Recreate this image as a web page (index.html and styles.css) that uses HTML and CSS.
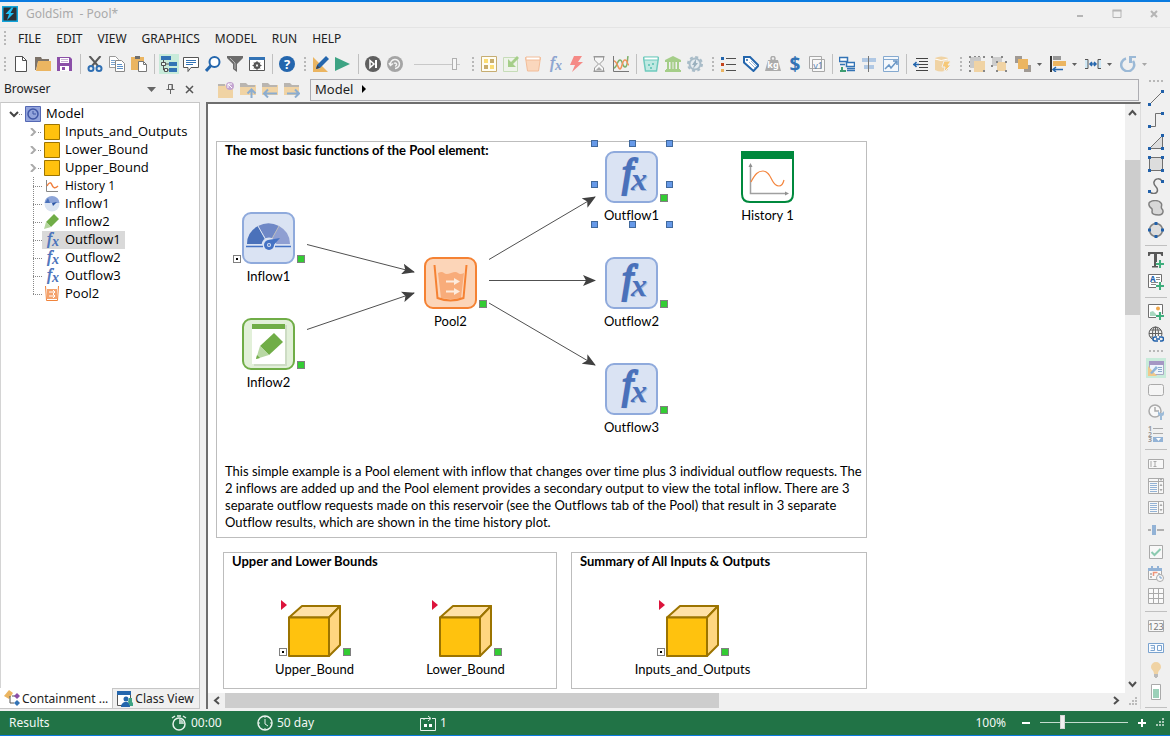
FILE: index.html
```html
<!DOCTYPE html>
<html lang="en">
<head>
    <meta charset="UTF-8">
    <meta name="viewport" content="width=device-width, initial-scale=1.0">
    <title>GoldSim - Pool*</title>
    <link rel="stylesheet" href="styles.css">
</head>
<body>

    <!-- Shared icons -->
    <svg class="defs" aria-hidden="true">
        <symbol id="i-fx" viewBox="0 0 16 16">
            <text x="3" y="12" class="fx-letter fx-f" font-size="17">f</text>
            <text x="8" y="14" class="fx-letter" font-size="14">x</text>
        </symbol>
        <symbol id="i-box" viewBox="0 0 16 16"><path d="M.5 .5h15v15H.5z" fill="#ffc20e" stroke="#9c7400"/></symbol>
        <symbol id="n-fx" viewBox="0 0 53 52">
            <rect x="1" y="1" width="51" height="50" rx="8" fill="#dae3f3" stroke="#8faadc" stroke-width="2"/>
            <g class="fx-shade">
                <text x="18" y="36" class="fx-letter fx-f" font-size="39">f</text>
                <text x="27" y="40" class="fx-letter" font-size="32">x</text>
            </g>
            <text x="17" y="35" class="fx-letter fx-f fx-heavy" font-size="39">f</text>
            <text x="26" y="39" class="fx-letter" font-size="32">x</text>
        </symbol>
        <symbol id="n-cube" viewBox="0 0 53 52">
            <g stroke="#9c7400" stroke-width="2" stroke-linejoin="round">
                <path d="M1 12.500L14 1h38L41 12.500z" fill="#ffe1a6"/>
                <path d="M41 12.500L52 1v39L41 51z" fill="#ffd680"/>
                <path d="M1 12.500h40V51H1z" fill="#ffc20e"/>
            </g>
        </symbol>
        <symbol id="i-arrow" viewBox="0 0 5 3"><path d="M0 0h5L2.500 3z" fill="#606060"/></symbol>
    </svg>

    <div class="app">
        <header class="titlebar">
            <svg class="icon" viewBox="0 0 16 16"><path d="M0 0h16v16H0z" fill="#12a5dc"/><path d="M1.500 1.500h13v13h-13z" fill="#2b3035"/><path d="M9.500 1.500L3.500 8h3.500L5 14l7-7H8.500L11.500 1.500z" fill="#1fc0f5"/></svg>
            <span class="title">GoldSim  - Pool*</span>
            <div class="window-buttons">
                <button aria-label="Minimize"><svg class="icon" viewBox="0 0 16 16"><path d="M5 10h6" stroke="#b5b5b5" stroke-width="2"/></svg></button>
                <button aria-label="Maximize"><svg class="icon" viewBox="0 0 16 16"><path d="M4 4.500h8v7H4z" fill="none" stroke="#b5b5b5"/><path d="M3.500 4.500h9" stroke="#b5b5b5" stroke-width="2"/></svg></button>
                <button aria-label="Close"><svg class="icon" viewBox="0 0 16 16"><path d="M5 5l6 6M11 5l-6 6" stroke="#b5b5b5" stroke-width="2"/></svg></button>
            </div>
        </header>

        <nav class="menubar">
            <span class="grip"></span>
            <button>FILE</button>
            <button>EDIT</button>
            <button>VIEW</button>
            <button>GRAPHICS</button>
            <button>MODEL</button>
            <button>RUN</button>
            <button>HELP</button>
        </nav>

        <!-- Main toolbar -->
        <div class="toolbar">
            <span class="grip"></span>
            <button class="tool" aria-label="New"><svg class="icon" viewBox="0 0 16 16"><path d="M2.500 .5h7l4 4v11h-11z" fill="#fff" stroke="#505050"/><path d="M9.500 .5v4h4" fill="none" stroke="#505050"/></svg></button>
            <button class="tool" aria-label="Open"><svg class="icon" viewBox="0 0 16 16"><path d="M0 1h6l1 2h7v3H3L1 14H0z" fill="#7c7268"/><path d="M3 5h13v10H1z" fill="#ebb561"/></svg></button>
            <button class="tool" aria-label="Save"><svg class="icon" viewBox="0 0 16 16"><path d="M0 1h13l2 2v12H0z" fill="#8b4fa8"/><path d="M3 2h9v5H3z" fill="#fff"/><path d="M3 10h9v5H3z" fill="#fff"/><path d="M4 3.500h7M4 5.500h7" stroke="#c9b3d4"/><path d="M5 11h3v3H5z" fill="#8b4fa8"/></svg></button>
            <span class="sep"></span>
            <button class="tool" aria-label="Cut"><svg class="icon" viewBox="0 0 16 16"><path d="M2.500 0l8.500 10M13.500 0L5 10" stroke="#5a5a5a" stroke-width="2"/><circle cx="4" cy="12.500" r="2.500" fill="none" stroke="#2f6fb3" stroke-width="2"/><circle cx="12" cy="12.500" r="2.500" fill="none" stroke="#2f6fb3" stroke-width="2"/></svg></button>
            <button class="tool" aria-label="Copy"><svg class="icon" viewBox="0 0 16 16"><path d="M.5 .5h6l3 3v8h-9z" fill="#fff" stroke="#999"/><path d="M2 4.500h4M2 6.500h4M2 8.500h4" stroke="#7aa3cf"/><path d="M6.500 4.500h6l3 3v8h-9z" fill="#fff" stroke="#888"/><path d="M8 8.500h5M8 10.500h6M8 12.500h6" stroke="#5b8fc7"/></svg></button>
            <button class="tool" aria-label="Paste"><svg class="icon" viewBox="0 0 16 16"><path d="M0 1h13v13H0z" fill="#ebb561"/><path d="M4 0h5v3H4z" fill="#6e6e6e"/><path d="M7.500 5.500h5l3 3v7h-8z" fill="#fff" stroke="#777"/><path d="M12.500 5.500v3h3" fill="none" stroke="#777"/></svg></button>
            <span class="sep"></span>
            <button class="tool on" aria-label="Browser"><svg class="icon" viewBox="0 0 16 16"><path d="M0 0h10v4H0zM8 6h8v4H8zM8 12h8v4H8z" fill="#3373b5"/><path d="M2.500 4v10H8M2.500 8H8" fill="none" stroke="#505050"/><path d="M.5 6.500h4v3h-4zM3.500 12.500h3v3h-3z" fill="#e8f5ee" stroke="#505050"/></svg></button>
            <button class="tool" aria-label="Notes"><svg class="icon" viewBox="0 0 16 16"><path d="M.5 1.500h15v10H8l-3 4v-4H.5z" fill="#fff" stroke="#555"/><path d="M3 4.500h10M3 6.500h10M3 8.500h7" stroke="#3373b5"/></svg></button>
            <button class="tool" aria-label="Find"><svg class="icon" viewBox="0 0 16 16"><circle cx="9.500" cy="6" r="5" fill="#fff" stroke="#2466ad" stroke-width="2"/><path d="M6 9.500L1 15" stroke="#2466ad" stroke-width="3"/></svg></button>
            <button class="tool" aria-label="Filter"><svg class="icon" viewBox="0 0 16 16"><path d="M0 0h16v2L10 8v8l-4-3V8L0 2z" fill="#6b6b6b"/><path d="M3 2l5 5v6" fill="none" stroke="#b5b5b5"/></svg></button>
            <button class="tool" aria-label="Options"><svg class="icon" viewBox="0 0 16 16"><path d="M.5 1.500h15v13H.5z" fill="#fff" stroke="#555"/><path d="M0 1h16v3H0z" fill="#3373b5"/><circle cx="8" cy="9.500" r="2.500" fill="none" stroke="#555" stroke-width="2"/><path d="M8 5v9M3.500 9.500h9M5 6.500l6 6M11 6.500l-6 6" stroke="#555"/><circle cx="8" cy="9.500" r="1" fill="#fff"/></svg></button>
            <span class="sep"></span>
            <button class="tool" aria-label="Help"><svg class="icon" viewBox="0 0 16 16"><circle cx="8" cy="8" r="8" fill="#2466ad"/><text x="8" y="13" font-size="13" font-weight="bold" text-anchor="middle" fill="#fff">?</text></svg></button>
            <span class="grip"></span>
            <button class="tool" aria-label="Edit mode"><svg class="icon" viewBox="0 0 16 16"><path d="M0 1v15h15z" fill="#ebb561"/><path d="M3 9v4h4z" fill="#f0f0f0"/><path d="M3 13l1-4 9-9 3 3-9 9z" fill="#2466ad"/><path d="M3 13l1-4 3 3z" fill="#444"/></svg></button>
            <button class="tool" aria-label="Run"><svg class="icon" viewBox="0 0 16 16"><path d="M0 1l15 7L0 15z" fill="#3da383"/></svg></button>
            <span class="sep"></span>
            <button class="tool" aria-label="Step"><svg class="icon" viewBox="0 0 16 16"><circle cx="8" cy="8" r="8" fill="#5f5f5f"/><path d="M5 4.500L9 8l-4 3.500z" fill="#5f5f5f" stroke="#fff" stroke-width="1.500"/><path d="M11 4v8" stroke="#fff" stroke-width="2"/></svg></button>
            <button class="tool" aria-label="Reset"><svg class="icon" viewBox="0 0 16 16"><circle cx="8" cy="8" r="8" fill="#a5a5a5"/><path d="M3.500 8.500a4.500 4.500 0 1 1 4.500 4M2 7l1.500 2.500L6 7.500M7 7.500a1.500 1.500 0 1 1 1 2.500" fill="none" stroke="#f4f4f4" stroke-width="1.500"/></svg></button>
            <input class="speed" type="range" min="0" max="100" value="93" aria-label="Speed">
            <span class="grip"></span>
            <button class="tool" aria-label="Data"><svg class="icon" viewBox="0 0 16 16"><path d="M.5 .5h15v15H.5z" fill="#fffdf2" stroke="#c6ad72"/><path d="M3 3h4v4H3zM9 9h4v4H9z" fill="#fbdc72"/><path d="M9 3h4v4H9zM3 9h4v4H3z" fill="#c8ad6c"/></svg></button>
            <button class="tool" aria-label="Insert result"><svg class="icon" viewBox="0 0 16 16"><path d="M.5 1.500h14v14H.5z" fill="#eef3ea" stroke="#c6dcb8"/><path d="M5 3v8h8l-3-3 6-6-2-2-6 6z" fill="#a5ce89"/></svg></button>
            <button class="tool" aria-label="Stock"><svg class="icon" viewBox="0 0 16 16"><path d="M.5 1.500h15L13.500 15h-11z" fill="#fad7bd" stroke="#f2bc98"/><path d="M1 1h14v3H1z" fill="#fff" stroke="#f2bc98"/></svg></button>
            <button class="tool faded" aria-label="Function"><svg class="icon" viewBox="0 0 16 16"><use href="#i-fx"/></svg></button>
            <button class="tool" aria-label="Event"><svg class="icon" viewBox="0 0 16 16"><path d="M5 0h8L9 6h5L3 16l3-7H1z" fill="#f58a86"/></svg></button>
            <button class="tool" aria-label="Delay"><svg class="icon" viewBox="0 0 16 16"><path d="M2.500 .5h11M2.500 15.500h11" stroke="#999" stroke-width="2"/><path d="M3.500 1v3l4 4-4 4v3h9v-3l-4-4 4-4V1z" fill="#f7f7f7" stroke="#999"/><path d="M5 14l3-3 3 3z" fill="#aaa"/></svg></button>
            <button class="tool" aria-label="Results"><svg class="icon" viewBox="0 0 16 16"><path d="M.5 0v15.500H16" fill="none" stroke="#777"/><path d="M1 12c3 0 3-8 6-8s2 7 5 7 2-6 3-11" fill="none" stroke="#7fb069" stroke-width="1.500"/><path d="M1 5c3 0 4 8 6 8s2-9 5-9 2 5 4 5" fill="none" stroke="#f0935a" stroke-width="1.500"/></svg></button>
            <span class="sep"></span>
            <button class="tool" aria-label="Reservoir"><svg class="icon" viewBox="0 0 16 16"><path d="M.5 1.500h15L13.500 15h-11z" fill="#bfe9e2" stroke="#6fcabd" stroke-width="1.500"/><path d="M1 1h14v3H1z" fill="#fff" stroke="#6fcabd"/><path d="M5 8h2v2H5zM9 7h2v2H9zM7 11h2v2H7z" fill="#6fcabd"/></svg></button>
            <button class="tool" aria-label="Financial"><svg class="icon" viewBox="0 0 16 16"><path d="M8 0l8 4v2H0V4zM1 13h14v1h1v2H0v-2h1z" fill="#a5ce89"/><path d="M3 6v7M6.500 6v7M9.500 6v7M13 6v7" stroke="#a5ce89" stroke-width="2"/></svg></button>
            <button class="tool" aria-label="Reliability"><svg class="icon" viewBox="0 0 16 16"><circle cx="8" cy="8" r="7" fill="none" stroke="#a9bcc8" stroke-width="2" stroke-dasharray="3 2.500"/><circle cx="8" cy="8" r="5.500" fill="#e4ebef" stroke="#a9bcc8" stroke-width="2"/><path d="M9 3L5 9h2l-1 4 5-6H9z" fill="#9ab0be"/></svg></button>
            <span class="grip"></span>
            <button class="tool" aria-label="List"><svg class="icon" viewBox="0 0 16 16"><path d="M0 1h3v3H0z" fill="#2466ad"/><path d="M0 7h3v3H0z" fill="#c4431c"/><path d="M0 13h3v3H0z" fill="#ebb561"/><path d="M5 2.500h10M5 8.500h10M5 14.500h10" stroke="#505050"/></svg></button>
            <button class="tool" aria-label="Labels"><svg class="icon" viewBox="0 0 16 16"><path d="M1 1h6l8.500 8.500-5 5.500L1 6.500z" fill="#fff" stroke="#2466ad" stroke-width="2"/><circle cx="4" cy="4" r="1" fill="#2466ad"/><path d="M6 6l6 6M8 5l5 5" stroke="#9db9d8"/></svg></button>
            <button class="tool" aria-label="Units"><svg class="icon" viewBox="0 0 16 16"><circle cx="8" cy="2.500" r="2" fill="none" stroke="#ababab" stroke-width="1.500"/><path d="M3 4h10l3 11H0z" fill="#ababab"/><text x="8" y="12" font-size="9" font-weight="bold" text-anchor="middle" fill="#fff">kg</text></svg></button>
            <button class="tool" aria-label="Currency"><svg class="icon" viewBox="0 0 16 16"><text x="8" y="15" font-size="19" font-weight="bold" text-anchor="middle" fill="#3373b5">$</text></svg></button>
            <button class="tool" aria-label="Versions"><svg class="icon" viewBox="0 0 16 16"><path d="M.5 .5h12v12H.5zM3.500 3.500h12v12h-12z" fill="#f8f8f8" stroke="#a8a8a8"/><text x="9" y="13" font-size="9" text-anchor="middle" fill="#5c86b5">v1</text></svg></button>
            <span class="sep"></span>
            <button class="tool" aria-label="Network"><svg class="icon" viewBox="0 0 16 16"><path d="M.5 1.500h8v4h-8zM7.500 6.500h8v4h-8z" fill="#fff" stroke="#3373b5" stroke-width="1.500"/><path d="M1 8.500h5M8 14.500h8M8 12.500h8" stroke="#3373b5" stroke-width="1.500"/><path d="M3 11v4M1 15h6" stroke="#3f9d72" stroke-width="2"/></svg></button>
            <button class="tool" aria-label="Center"><svg class="icon" viewBox="0 0 16 16"><path d="M1 2h14v4H1zM3 9h10v4H3z" fill="#b0c8e4"/><path d="M7.500 0v16" stroke="#777"/></svg></button>
            <button class="tool" aria-label="Chart"><svg class="icon" viewBox="0 0 16 16"><path d="M.5 .5h15v15H.5zM0 3.500h16" fill="#f4f8fc" stroke="#85a9cf"/><path d="M2 13l4-4 2 3 6-7M10 5h4v4" fill="none" stroke="#6a97c6" stroke-width="1.500"/></svg></button>
            <span class="sep"></span>
            <button class="tool" aria-label="Indent"><svg class="icon" viewBox="0 0 16 16"><path d="M3 2.500h12M6 5.500h9M6 8.500h9M6 11.500h9M3 14.500h12" stroke="#444"/><path d="M0 8.500h6M3.500 6L1 8.500 3.500 11" fill="none" stroke="#2466ad" stroke-width="1.500"/></svg></button>
            <button class="tool" aria-label="Database"><svg class="icon" viewBox="0 0 16 16"><path d="M0 2q6-3 13 0v12q-7 3-13 0z" fill="#f0d3a4"/><path d="M0 3q6 3 13 0" fill="none" stroke="#fff"/><path d="M9 5h7l-3 4h3l-7 7 1-5H7z" fill="#f6c877" stroke="#f0f0f0"/></svg></button>
            <span class="grip"></span>
            <button class="tool" aria-label="Group"><svg class="icon" viewBox="0 0 16 16"><path d="M1 1h11v11H1z" fill="#c9c9c9"/><path d="M5 5h11v11H5z" fill="#f0d3a4"/><path d="M0 0h2v2H0zM5 0h2v1H5zM9 0h2v1H9zM14 0h2v2h-2zM0 5h1v2H0zM0 9h1v2H0zM0 14h2v2H0zM14 14h2v2h-2z" fill="#888"/></svg></button>
            <button class="tool" aria-label="Ungroup"><svg class="icon" viewBox="0 0 16 16"><path d="M1 1h10v9H1z" fill="#cdcdcd"/><path d="M6 6h9v9H6z" fill="#f0d3a4"/><path d="M0 0h2v2H0zM10 0h2v2h-2zM0 9h2v2H0zM5 5h2v2H5zM14 5h2v2h-2zM5 14h2v2H5zM14 14h2v2h-2z" fill="#888"/></svg></button>
            <button class="tool split" aria-label="Order"><svg class="icon" viewBox="0 0 16 16"><path d="M0 0h7v7H0zM9 9h7v7H9z" fill="#a09a94"/><path d="M3 3h10v10H3z" fill="#ebb561"/></svg><svg class="caret"><use href="#i-arrow"/></svg></button>
            <button class="tool split" aria-label="Align"><svg class="icon" viewBox="0 0 16 16"><path d="M1 0v16" stroke="#333" stroke-width="2"/><path d="M3 0h8v4H3z" fill="#999"/><path d="M3 5h13v5H3z" fill="#ebb561"/><path d="M3 13.500h10M6 11l-3 2.500L6 16" fill="none" stroke="#2466ad" stroke-width="1.500"/></svg><svg class="caret"><use href="#i-arrow"/></svg></button>
            <button class="tool split" aria-label="Spacing"><svg class="icon" viewBox="0 0 16 16"><path d="M0 3.500h3v9H0M16 3.500h-3v9h3" fill="#cfe8f5" stroke="#555"/><path d="M5 8h6M7 6L5 8l2 2M9 6l2 2-2 2" fill="none" stroke="#2466ad" stroke-width="1.500"/></svg><svg class="caret"><use href="#i-arrow"/></svg></button>
            <button class="tool split" aria-label="Rotate"><svg class="icon" viewBox="0 0 16 16"><path d="M6 2.500A6.500 6.500 0 1 0 13 5" fill="none" stroke="#9bb9d6" stroke-width="2.500"/><path d="M9 0h7v2h-4v5H9z" fill="#9bb9d6"/></svg><svg class="caret light"><use href="#i-arrow"/></svg></button>
        </div>

        <div class="work">
            <!-- Browser pane -->
            <aside class="browser">
                <div class="pane-head">
                    <span class="pane-title">Browser</span>
                    <button aria-label="Menu"><svg class="icon" viewBox="0 0 16 16"><path d="M3 6h9L7.500 11z" fill="#666"/></svg></button>
                    <button aria-label="Pin"><svg class="icon" viewBox="0 0 16 16"><path d="M5.500 8V3.500h4V8M9 3.500V8M3.500 8.500h8M7.500 8v5" fill="none" stroke="#666"/></svg></button>
                    <button aria-label="Close"><svg class="icon" viewBox="0 0 16 16"><path d="M4 5l7 7M11 5l-7 7" stroke="#555" stroke-width="1.500"/></svg></button>
                </div>
                <ul class="tree">
                    <li class="root"><svg class="twist" viewBox="0 0 10 8"><path d="M1 2l4 4 4-4" fill="none" stroke="#444" stroke-width="2"/></svg><span class="stub"></span><span class="item"><svg class="icon" viewBox="0 0 16 16"><path d="M.5 .5h15v15H.5z" fill="#93a4dc" stroke="#5468b4"/><circle cx="8" cy="8" r="5" fill="none" stroke="#3f56a5" stroke-width="1.500"/><path d="M8 5v3h3" fill="none" stroke="#3f56a5"/></svg>Model</span></li>
                    <li><svg class="twist" viewBox="0 0 10 8"><path d="M3 0l4 4-4 4" fill="none" stroke="#aaa" stroke-width="2"/></svg><span class="stub"></span><span class="item"><svg class="icon"><use href="#i-box"/></svg>Inputs_and_Outputs</span></li>
                    <li><svg class="twist" viewBox="0 0 10 8"><path d="M3 0l4 4-4 4" fill="none" stroke="#aaa" stroke-width="2"/></svg><span class="stub"></span><span class="item"><svg class="icon"><use href="#i-box"/></svg>Lower_Bound</span></li>
                    <li><svg class="twist" viewBox="0 0 10 8"><path d="M3 0l4 4-4 4" fill="none" stroke="#aaa" stroke-width="2"/></svg><span class="stub"></span><span class="item"><svg class="icon"><use href="#i-box"/></svg>Upper_Bound</span></li>
                    <li><span class="guide"></span><span class="item result"><svg class="icon" viewBox="0 0 16 16"><path d="M2.500 2v11.500H14" fill="none" stroke="#888"/><path d="M3 8c2-4 4-4 5-1s3 4 6 1" fill="none" stroke="#f08040" stroke-width="1.500"/></svg>History 1</span></li>
                    <li><span class="guide"></span><span class="item"><svg class="icon" viewBox="0 0 16 16"><circle cx="8" cy="8" r="7.500" fill="#dbe4f2"/><path d="M.5 7A7.500 7 0 0 1 15.500 7z" fill="#8ea5d8"/><path d="M6 7L4 2 1 7z" fill="#4a71ba"/><path d="M8 7l5-1-4 4z" fill="#2a55a5"/></svg>Inflow1</span></li>
                    <li><span class="guide"></span><span class="item"><svg class="icon" viewBox="0 0 16 16"><path d="M10 0l5 5-8 8-5-5z" fill="#70ad47"/><path d="M2 8l5 5-7 2z" fill="#b5d59e"/></svg>Inflow2</span></li>
                    <li><span class="guide"></span><span class="item selected"><svg class="icon"><use href="#i-fx"/></svg>Outflow1</span></li>
                    <li><span class="guide"></span><span class="item"><svg class="icon"><use href="#i-fx"/></svg>Outflow2</span></li>
                    <li><span class="guide"></span><span class="item"><svg class="icon"><use href="#i-fx"/></svg>Outflow3</span></li>
                    <li><span class="guide last"></span><span class="item"><svg class="icon" viewBox="0 0 16 16"><path d="M1.500 0l1 14.500h11l1-14.500" fill="#fff" stroke="#f0843c"/><path d="M3 3h10v10H3z" fill="#f4a26c"/><path d="M5 6h6M9 4l2 2-2 2M5 10h6M9 8l2 2-2 2" fill="none" stroke="#fff"/></svg>Pool2</span></li>
                </ul>
                <div class="tabs">
                    <button class="tab active"><svg class="icon" viewBox="0 0 16 16"><path d="M5 0l4 3-4 6-5-3z" fill="#ebb561"/><path d="M6 6v7h4M8 6h3" fill="none" stroke="#555"/><path d="M13 3l3 3-3 3-3-3z" fill="#8b4fa8"/><path d="M13 10l3 3-3 3-3-3z" fill="#3373b5"/></svg>Containment ...</button>
                    <button class="tab"><svg class="icon" viewBox="0 0 16 16"><path d="M.5 .5h13v14H.5z" fill="#fff" stroke="#555"/><path d="M0 0h14v4H0z" fill="#2466ad"/><circle cx="9" cy="8" r="2.500" fill="#2466ad"/><path d="M4 16c0-3 2-5 5-5s4 2 4 5z" fill="#2466ad"/><path d="M12 7h3v4l1 1v3h-3l-2-4z" fill="#3da383"/></svg>Class View</button>
                </div>
            </aside>

            <main class="editor">
                <div class="location">
                    <button class="tool" aria-label="Back to container"><svg class="icon" viewBox="0 0 16 16"><path d="M0 2h7l1 2h7v12H0z" fill="#f0d3a4"/><path d="M0 2h7v2H0z" fill="#b9b5b0"/><circle cx="12" cy="4" r="4" fill="#c3a4d0"/><path d="M10 6V2h4M10 2l4 4" fill="none" stroke="#fff"/></svg></button>
                    <button class="tool" aria-label="Up"><svg class="icon" viewBox="0 0 16 16"><path d="M0 3h16v10H0z" fill="#f0d3a4"/><path d="M0 1h6l2 2h7v2H0z" fill="#b9b5b0"/><path d="M11.500 16V8M7.500 11.500l4-4 4 4" fill="none" stroke="#8cadd0" stroke-width="2"/></svg></button>
                    <button class="tool" aria-label="Previous"><svg class="icon" viewBox="0 0 16 16"><path d="M0 3h16v10H0z" fill="#f0d3a4"/><path d="M0 1h6l2 2h7v2H0z" fill="#b9b5b0"/><path d="M15 11.500H2M6 7.500l-4 4 4 4" fill="none" stroke="#8cadd0" stroke-width="2"/></svg></button>
                    <button class="tool" aria-label="Next"><svg class="icon" viewBox="0 0 16 16"><path d="M0 3h15v10H0z" fill="#f0d3a4"/><path d="M0 1h6l2 2h7v2H0z" fill="#b9b5b0"/><path d="M3 11.500h12M11 7.500l4 4-4 4" fill="none" stroke="#8cadd0" stroke-width="2"/></svg></button>
                    <div class="path"><button>Model<svg class="path-arrow" viewBox="0 0 4 8"><path d="M0 0l4 4-4 4z"/></svg></button></div>
                </div>

                <div class="frame">
                    <!-- Graphics pane, coordinates run from its top left corner -->
                    <div class="canvas">
                        <section class="note main-note">
                            <h2>The most basic functions of the Pool element:</h2>
                            <p>This simple example is a Pool element with inflow that changes over time plus 3 individual outflow requests. The<br>
                            2 inflows are added up and the Pool element provides a secondary output to view the total inflow. There are 3<br>
                            separate outflow requests made on this reservoir (see the Outflows tab of the Pool) that result in 3 separate<br>
                            Outflow results, which are shown in the time history plot.</p>
                        </section>
                        <section class="note bounds-note">
                            <h2>Upper and Lower Bounds</h2>
                        </section>
                        <section class="note summary-note">
                            <h2>Summary of All Inputs &amp; Outputs</h2>
                        </section>

                        <svg class="links" width="660" height="400">
                            <defs>
                                <marker id="head" viewBox="0 0 13 11" refX="12" refY="5.500" markerWidth="13" markerHeight="11" markerUnits="userSpaceOnUse" orient="auto"><path d="M0 0l13 5.500L0 11l3-5.500z" fill="#404040"/></marker>
                            </defs>
                            <g stroke="#505050">
                                <path d="M99 140.500L206 168" marker-end="url(#head)"/>
                                <path d="M99 225.500L206 189" marker-end="url(#head)"/>
                                <path d="M281 155.500L387 93" marker-end="url(#head)"/>
                                <path d="M281 176.500H387" marker-end="url(#head)"/>
                                <path d="M281 199L387 261" marker-end="url(#head)"/>
                            </g>
                        </svg>

                        <div class="node inflow1">
                            <svg class="pic" viewBox="0 0 53 52">
                                <rect x="1" y="1" width="51" height="50" rx="8" fill="#dae3f3" stroke="#8faadc" stroke-width="2"/>
                                <path d="M5 32A22 20.500 0 0 1 16 14l10 18z" fill="#4a71ba"/>
                                <path d="M16 14A22 21 0 0 1 37 14L27 32z" fill="#6f88c6"/>
                                <path d="M37 14A22 20.500 0 0 1 48 32H27z" fill="#8f9fd2"/>
                                <path d="M16 14l10 18" stroke="#dae3f3"/><path d="M37 14L27 32" stroke="#bbb"/>
                                <circle cx="27" cy="33" r="7.500" fill="#dae3f3"/>
                                <path d="M4 34.500h17M33 34.500h16" stroke="#4472c4" stroke-width="1.500"/>
                                <circle cx="27" cy="33" r="5" fill="#4472c4"/>
                                <path d="M26 28l12-2-8 9z" fill="#4472c4"/>
                                <circle cx="27" cy="33" r="2" fill="#dae3f3"/><circle cx="27" cy="33" r="1" fill="#4472c4"/>
                            </svg>
                            <span class="port in"></span><span class="port out"></span>
                            <span class="label">Inflow1</span>
                        </div>
                        <div class="node inflow2">
                            <svg class="pic" viewBox="0 0 53 52">
                                <rect x="1" y="1" width="51" height="50" rx="8" fill="#e2f0d9" stroke="#70ad47" stroke-width="2"/>
                                <path d="M12 7h33v41H12z" fill="#cddcc4"/>
                                <path d="M10 6h33v40H10z" fill="#fff"/>
                                <path d="M10 6h33v5H10z" fill="#70ad47"/>
                                <path d="M32 15l9 9-14 13-9-9z" fill="#70ad47"/>
                                <path d="M18 28l9 9-13 4z" fill="#b8d8a4"/>
                                <path d="M15 37l3 3-4 1z" fill="#70ad47"/>
                            </svg>
                            <span class="port out"></span>
                            <span class="label">Inflow2</span>
                        </div>
                        <div class="node pool2">
                            <svg class="pic" viewBox="0 0 53 52">
                                <rect x="1" y="1" width="51" height="50" rx="8" fill="#fcd5b8" stroke="#f58233" stroke-width="2"/>
                                <path d="M14 16q4-2 6 0t7 0 7 0 6 0l-3 25q-10 2-20 0z" fill="#f8ac7a"/>
                                <path d="M10.500 8l3 33q13 5 26 0l3-33" fill="none" stroke="#f58233" stroke-width="2"/>
                                <path d="M22 24.500h11M22 34.500h11" stroke="#fdebdd" stroke-width="2"/>
                                <path d="M30 21l6 3.500-6 3.500zM30 31l6 3.500-6 3.500z" fill="#fdebdd"/>
                            </svg>
                            <span class="port out"></span>
                            <span class="label">Pool2</span>
                        </div>
                        <div class="node outflow1">
                            <svg class="pic"><use href="#n-fx"/></svg>
                            <span class="port out"></span>
                            <span class="label">Outflow1</span>
                            <div class="handles"><i></i><i></i><i></i><i></i><i class="gap"></i><i></i><i></i><i></i><i></i></div>
                        </div>
                        <div class="node outflow2">
                            <svg class="pic"><use href="#n-fx"/></svg>
                            <span class="port out"></span>
                            <span class="label">Outflow2</span>
                        </div>
                        <div class="node outflow3">
                            <svg class="pic"><use href="#n-fx"/></svg>
                            <span class="port out"></span>
                            <span class="label">Outflow3</span>
                        </div>
                        <div class="node history1">
                            <svg class="pic" viewBox="0 0 53 52">
                                <path d="M1 1v42q0 8 8 8h35q8 0 8-8V1z" fill="#fff" stroke="#00893d" stroke-width="2"/>
                                <path d="M0 0h53v8H0z" fill="#00893d"/>
                                <path d="M9.500 14v28.500H45" fill="none" stroke="#a0a0a0" stroke-width="1.500"/>
                                <path d="M7.500 16l2-4 2 4zM44 40.500l4 2-4 2z" fill="#909090"/>
                                <path d="M10 31c4-8 7-11 12-11s7 5 9 9 5 6 7 6 4-2 5-6" fill="none" stroke="#f4853d" stroke-width="1.200"/>
                            </svg>
                            <span class="label">History 1</span>
                        </div>
                        <div class="node upper">
                            <svg class="pic"><use href="#n-cube"/></svg>
                            <span class="flag"></span><span class="port in"></span><span class="port out"></span>
                            <span class="label">Upper_Bound</span>
                        </div>
                        <div class="node lower">
                            <svg class="pic"><use href="#n-cube"/></svg>
                            <span class="flag"></span><span class="port out"></span>
                            <span class="label">Lower_Bound</span>
                        </div>
                        <div class="node inputs">
                            <svg class="pic"><use href="#n-cube"/></svg>
                            <span class="flag"></span><span class="port in"></span><span class="port out"></span>
                            <span class="label">Inputs_and_Outputs</span>
                        </div>
                    </div>

                    <div class="scroll vertical">
                        <button aria-label="Scroll up"><svg width="9" height="7"><path d="M1 6l3.500-4L8 6" fill="none" stroke="#505050" stroke-width="2"/></svg></button>
                        <div class="track"><div class="thumb"></div></div>
                        <button aria-label="Scroll down"><svg width="9" height="7"><path d="M1 1l3.500 4L8 1" fill="none" stroke="#505050" stroke-width="2"/></svg></button>
                    </div>
                    <div class="scroll horizontal">
                        <button aria-label="Scroll left"><svg width="7" height="9"><path d="M6 1L2 4.500 6 8" fill="none" stroke="#505050" stroke-width="2"/></svg></button>
                        <div class="track"><div class="thumb"></div></div>
                        <button aria-label="Scroll right"><svg width="7" height="9"><path d="M1 1l4 3.500L1 8" fill="none" stroke="#505050" stroke-width="2"/></svg></button>
                    </div>
                    <svg class="corner" viewBox="0 0 15 16"><path d="M10 4h2v2h-2zM7 7h2v2H7zM10 7h2v2h-2zM4 10h2v2H4zM7 10h2v2H7zM10 10h2v2h-2z" fill="#bbb"/></svg>
                </div>
            </main>

            <!-- Drawing tools -->
            <div class="sidebar">
                <span class="grip"></span>
                <button class="tool" aria-label="Line"><svg class="icon" viewBox="0 0 16 16"><path d="M1.500 14.500l13-13" stroke="#707070"/><path d="M0 13h3v3H0zM13 0h3v3h-3z" fill="#2060aa"/></svg></button>
                <button class="tool" aria-label="Polyline"><svg class="icon" viewBox="0 0 16 16"><path d="M1.500 14.500h6v-13h7" fill="none" stroke="#707070"/><path d="M0 13h3v3H0zM13 0h3v3h-3z" fill="#2060aa"/></svg></button>
                <button class="tool" aria-label="Polygon"><svg class="icon" viewBox="0 0 16 16"><path d="M1.500 14.500h13v-13z" fill="#ddd" stroke="#707070"/><path d="M0 13h3v3H0zM13 0h3v3h-3zM13 13h3v3h-3z" fill="#2060aa"/></svg></button>
                <button class="tool" aria-label="Rectangle"><svg class="icon" viewBox="0 0 16 16"><path d="M1.500 1.500h13v13h-13z" fill="#ddd" stroke="#707070"/><path d="M0 0h3v3H0zM0 13h3v3H0zM13 0h3v3h-3zM13 13h3v3h-3z" fill="#2060aa"/></svg></button>
                <button class="tool" aria-label="Curve"><svg class="icon" viewBox="0 0 16 16"><path d="M1.500 13c2 4 8 3 8-1S5 8 6 4s6-4 8-1" fill="none" stroke="#707070" stroke-width="1.500"/><path d="M0 12h3v3H0zM13 2h3v3h-3z" fill="#2060aa"/></svg></button>
                <button class="tool" aria-label="Closed curve"><svg class="icon" viewBox="0 0 16 16"><path d="M2 2c3-2 9-2 11 1 2 2-1 4 1 6s1 6-3 6-7-1-7-3 1-3-1-4-3-5-1-6z" fill="#d8d8d8" stroke="#808080" stroke-width="1.500"/></svg></button>
                <button class="tool" aria-label="Ellipse"><svg class="icon" viewBox="0 0 16 16"><circle cx="8" cy="8" r="6.500" fill="#ddd" stroke="#808080" stroke-width="1.500"/><path d="M6.500 0h3v3h-3zM6.500 13h3v3h-3zM0 6.500h3v3H0zM13 6.500h3v3h-3z" fill="#2060aa"/></svg></button>
                <span class="sep"></span>
                <button class="tool" aria-label="Text"><svg class="icon" viewBox="0 0 16 16"><path d="M0 0h15v4h-1.500l-1-2H9v12h2v1.500H4V14h2V2H2.500l-1 2H0z" fill="#585858"/><path d="M12 8v8M8 12h8" stroke="#f0f0f0" stroke-width="4"/><path d="M12 8v8M8 12h8" stroke="#3fae7d" stroke-width="2"/></svg></button>
                <button class="tool" aria-label="Text box"><svg class="icon" viewBox="0 0 16 16"><path d="M.5 .5h13v13H.5z" fill="#fff" stroke="#707070"/><path d="M8 3.500h4M8 5.500h4M3 8.500h9M3 10.500h6" stroke="#888"/><text x="2" y="8" font-size="8" font-weight="bold" fill="#2060aa">A</text><path d="M12 8v8M8 12h8" stroke="#f0f0f0" stroke-width="4"/><path d="M12 8v8M8 12h8" stroke="#3fae7d" stroke-width="2"/></svg></button>
                <span class="sep"></span>
                <button class="tool" aria-label="Image"><svg class="icon" viewBox="0 0 16 16"><path d="M.5 .5h14v13H.5z" fill="#fff" stroke="#707070"/><path d="M2 12V8l3-1 3 3v2z" fill="#a9d8c0"/><circle cx="10" cy="4.500" r="2" fill="#f0a84c"/><path d="M12 8v8M8 12h8" stroke="#f0f0f0" stroke-width="4"/><path d="M12 8v8M8 12h8" stroke="#3fae7d" stroke-width="2"/></svg></button>
                <button class="tool" aria-label="Hyperlink"><svg class="icon" viewBox="0 0 16 16"><circle cx="7.500" cy="7.500" r="6.500" fill="none" stroke="#606060"/><path d="M7.500 1v13M1 7.500h13M2 4h11M2 11h11" stroke="#606060"/><ellipse cx="7.500" cy="7.500" rx="3" ry="6.500" fill="none" stroke="#606060"/><path d="M5 10h11v6H5z" fill="#f0f0f0"/><path d="M9 11H7a2 2 0 0 0 0 4h3M12 15h1.500a2 2 0 0 0 0-4H11M8 13h4" fill="none" stroke="#2060aa" stroke-width="1.500"/></svg></button>
                <span class="grip"></span>
                <button class="tool on" aria-label="Dashboard"><svg class="icon" viewBox="0 0 16 16"><path d="M1.500 1.500h14v13h-14z" fill="#eef4fb" stroke="#a9a9c4"/><path d="M1 1h15v4H1z" fill="#a497c4"/><path d="M10 7.500h4M10 9.500h4M10 11.500h4" stroke="#89a9cc"/><path d="M0 6v10h9z" fill="#f0c98c"/><path d="M2 13l6-7 2 2-6 6z" fill="#8fb4d8"/></svg></button>
                <button class="tool" aria-label="Button"><svg class="icon" viewBox="0 0 16 16"><rect x=".5" y="2.500" width="15" height="11" rx="2" fill="#f5f5f5" stroke="#aaa"/></svg></button>
                <button class="tool" aria-label="Time options"><svg class="icon" viewBox="0 0 16 16"><circle cx="7" cy="7" r="6" fill="#f8f8f8" stroke="#aaa" stroke-width="1.500"/><path d="M7 3v4h4" fill="none" stroke="#aaa" stroke-width="1.500"/><path d="M10 7v3q0 2 2 2v4h2v-4q2 0 2-2V7l-2 2h-2z" fill="#9dbbd8"/></svg></button>
                <button class="tool" aria-label="Numbered list"><svg class="icon" viewBox="0 0 16 16"><path d="M5 2.500h10M5 7.500h10" stroke="#aaa"/><path d="M5 11h10v5H5z" fill="#93b3d6"/><path d="M8 12h5l-2.500 3z" fill="#fff"/><g font-size="7" font-weight="bold" fill="#999"><text x="0" y="5">1</text><text x="0" y="11">2</text><text x="0" y="16">3</text></g></svg></button>
                <span class="sep"></span>
                <button class="tool" aria-label="Input field"><svg class="icon" viewBox="0 0 16 16"><path d="M.5 3.500h15v9H.5z" fill="#f8f8f8" stroke="#aaa"/><path d="M3 5v6M5.500 5.500h3M5.500 10.500h3M7 5.500v5" stroke="#aaa"/></svg></button>
                <button class="tool" aria-label="Combo box"><svg class="icon" viewBox="0 0 16 16"><path d="M.5 .5h15v15H.5zM.5 3.500h15M10.500 0v16" fill="#f8f8f8" stroke="#aaa"/><path d="M2 5.500h7M2 7.500h7M2 9.500h7M2 11.500h7M2 13.500h7" stroke="#93b3d6"/><path d="M11.500 1h3L13 3zM11.500 8h3L13 5.500zM11.500 11h3L13 13.500z" fill="#aaa"/></svg></button>
                <button class="tool" aria-label="List box"><svg class="icon" viewBox="0 0 16 16"><path d="M.5 1.500h15v12H.5zM10.500 1v13" fill="#f8f8f8" stroke="#aaa"/><path d="M2 3.500h7M2 5.500h7M2 7.500h7M2 9.500h7M2 11.500h7" stroke="#93b3d6"/><path d="M11.500 6h3L13 3.500zM11.500 9h3L13 11.500z" fill="#aaa"/></svg></button>
                <button class="tool" aria-label="Slider"><svg class="icon" viewBox="0 0 16 16"><path d="M0 8h3M9 8h7" stroke="#b0b0b0" stroke-width="2"/><path d="M4 3h4v10H4z" fill="#93b3d6"/></svg></button>
                <button class="tool" aria-label="Check box"><svg class="icon" viewBox="0 0 16 16"><path d="M1.500 1.500h13v13h-13z" fill="#f8f8f8" stroke="#aaa"/><path d="M3.500 8l3 3L12.500 5" fill="none" stroke="#8ccab0" stroke-width="2"/></svg></button>
                <button class="tool" aria-label="Date"><svg class="icon" viewBox="0 0 16 16"><path d="M.5 2.500h13v11H.5z" fill="#f8f8f8" stroke="#aaa"/><path d="M0 2h14v3H0zM3 0h2v2H3zM9 0h2v2H9z" fill="#93b3d6"/><path d="M2 8h2M2 11h2M10 8h2" stroke="#bbb" stroke-width="2"/><path d="M5.500 10V6.500h4" fill="none" stroke="#f0957a" stroke-width="1.500"/><circle cx="12" cy="12" r="3.500" fill="#f8f8f8" stroke="#aaa"/><path d="M12 10v2h2" fill="none" stroke="#7aa3cf"/></svg></button>
                <button class="tool" aria-label="Grid"><svg class="icon" viewBox="0 0 16 16"><path d="M.5 .5h15v15H.5zM5.500 0v16M10.500 0v16M0 5.500h16M0 10.500h16" fill="#fafafa" stroke="#aaa"/></svg></button>
                <span class="sep"></span>
                <button class="tool" aria-label="Number display"><svg class="icon" viewBox="0 0 16 16"><path d="M.5 2.500h15v11H.5z" fill="#f8f8f8" stroke="#aaa"/><text x="8" y="12" font-size="9" text-anchor="middle" fill="#777">123</text></svg></button>
                <button class="tool" aria-label="Digital display"><svg class="icon" viewBox="0 0 16 16"><path d="M.5 3.500h15v9H.5z" fill="#f8fbff" stroke="#7aa3cf"/><path d="M2.500 5.500h4v5h-4M3 8h3.500M9.500 5.500h4v5h-4z" fill="none" stroke="#7aa3cf"/></svg></button>
                <button class="tool" aria-label="Lamp"><svg class="icon" viewBox="0 0 16 16"><path d="M8 0a5 5 0 0 1 5 5c0 3-3 3-3 7H6c0-4-3-4-3-7a5 5 0 0 1 5-5z" fill="#f0d3a4"/><path d="M6 12h4v3H9v1H7v-1H6z" fill="#bbb"/></svg></button>
                <button class="tool" aria-label="Gauge"><svg class="icon" viewBox="0 0 16 16"><path d="M3.500 .5h9v15h-9z" fill="#fff" stroke="#aaa"/><path d="M5 5h6v9H5z" fill="#9bd0b8"/></svg></button>
                <span class="sep"></span>
            </div>
        </div>

        <footer class="status">
            <span class="mode">Results</span>
            <span class="elapsed"><svg class="icon" viewBox="0 0 16 16"><circle cx="8" cy="9" r="6" fill="none" stroke="#e8f2ec" stroke-width="1.500"/><path d="M8 9V4a5 5 0 0 1 5 5z" fill="#b5d2c2"/><path d="M1 3l3-2M15 3l-3-2M6 1h4" stroke="#e8f2ec" stroke-width="1.500"/></svg>00:00</span>
            <span class="duration"><svg class="icon" viewBox="0 0 16 16"><circle cx="8" cy="8" r="7" fill="none" stroke="#e8f2ec" stroke-width="1.500"/><path d="M8 4v5l3 2M8 1v2M8 13v2M1 8h2M13 8h2" fill="none" stroke="#e8f2ec"/></svg>50 day</span>
            <span class="runs"><svg class="icon" viewBox="0 0 16 16"><path d="M4 3.500H.5v12h15v-12H12M4 5V3.500h6M8 1l3 2.500L8 6" fill="none" stroke="#e8f2ec"/><path d="M4 9h3v3H4zM9 9h3v3H9z" fill="#fff"/></svg>1</span>
            <div class="zoom">
                <label for="zoom">100%</label>
                <button aria-label="Zoom out"><svg width="8" height="8"><path d="M0 4h8" stroke="#fff" stroke-width="2"/></svg></button>
                <input id="zoom" type="range" min="0" max="100" value="24">
                <button aria-label="Zoom in"><svg width="8" height="8"><path d="M0 4h8M4 0v8" stroke="#fff" stroke-width="2"/></svg></button>
                <svg width="9" height="9"><path d="M6 0h2v2H6zM3 3h2v2H3zM6 3h2v2H6zM0 6h2v2H0zM3 6h2v2H3zM6 6h2v2H6z" fill="#a9c8b6"/></svg>
            </div>
        </footer>
    </div>

</body>
</html>
```
FILE: styles.css
```css
* {
    box-sizing: border-box;
}

body {
    margin: 0;
    font-family: "Noto Sans", "Open Sans", sans-serif;
    font-size: 12px;
    color: #222;
    background: #f0f0f0;
}

button {
    padding: 0;
    border: none;
    background: none;
    color: inherit;
    font: inherit;
}

svg {
    display: block;
    flex: none;
}

.defs {
    display: none;
}

.icon {
    width: 16px;
    height: 16px;
}

.fx-letter {
    font-family: "Liberation Serif", serif;
    font-weight: bold;
    font-style: italic;
    fill: #4a71ba;
}

.fx-f {
    font-weight: normal;
    stroke: #4a71ba;
    stroke-width: 0.6px;
}

.fx-heavy {
    stroke-width: 2px;
}

.fx-shade {
    opacity: 0.35;
}

.app {
    display: flex;
    flex-direction: column;
    height: 100vh;
    overflow: hidden;
}

/* Title bar and menu */
.titlebar {
    display: flex;
    align-items: center;
    height: 28px;
    padding: 0 8px 2px 2px;
    border-top: 2px solid #0a7be0;
    border-bottom: 1px solid #e4e4e4;
}

.title {
    flex: 1;
    margin-left: 8px;
    color: #aaa;
    white-space: pre;
}

.window-buttons {
    display: flex;
    gap: 21px;
}

.menubar {
    display: flex;
    align-items: center;
    gap: 15px;
    height: 22px;
    padding-bottom: 2px;
    margin-left: -2px;
}

.menubar .grip {
    margin-right: -3px;
}

/* Toolbars */
.toolbar {
    display: flex;
    align-items: center;
    height: 25px;
    padding-top: 3px;
    margin-left: -2px;
}

.tool {
    display: flex;
    align-items: center;
    justify-content: center;
    width: 22px;
    height: 22px;
    flex: none;
}

.tool.on {
    width: 20px;
    height: 20px;
    margin: 1px;
    background: #c8ebda;
}

.tool.faded {
    opacity: 0.6;
}

.tool.split {
    width: 35px;
    justify-content: flex-start;
    gap: 6px;
    padding-left: 5px;
}

.caret {
    width: 5px;
    height: 3px;
}

.caret.light {
    opacity: 0.5;
}

.sep {
    width: 1px;
    height: 20px;
    margin: 0 3px 0 4px;
    background: #c0c0c0;
}

.grip {
    width: 2px;
    height: 14px;
    margin: 0 4px 0 6px;
    background: repeating-linear-gradient(#b8b8b8 0 2px, transparent 2px 4px);
}

input[type="range"] {
    appearance: none;
    background: none;
    height: 16px;
}

.speed {
    width: 46px;
    margin: 0 6px 0 8px;
}

.speed::-webkit-slider-runnable-track {
    height: 1px;
    background: #c8c8c8;
}

.speed::-webkit-slider-thumb {
    appearance: none;
    width: 5px;
    height: 12px;
    margin-top: -6px;
    border: 1px solid #b0b0b0;
    background: #f6f6f6;
}

/* Work area */
.work {
    display: flex;
    flex: 1;
    min-height: 0;
    padding-bottom: 2px;
}

.browser {
    display: flex;
    flex-direction: column;
    width: 200px;
    margin-right: 6px;
    flex: none;
}

.pane-head {
    display: flex;
    align-items: center;
    gap: 3px;
    height: 27px;
    padding: 0 2px 0 4px;
}

.pane-title {
    flex: 1;
}

.tree {
    flex: 1;
    margin: 0;
    padding: 2px 0 0;
    list-style: none;
    border: 1px solid #c6c6c6;
    border-left-color: #d4d4d4;
    background: #fff;
    font-family: "Open Sans", sans-serif;
    font-size: 13px;
    color: #000;
}

.tree li {
    display: flex;
    align-items: center;
    height: 18px;
    padding-left: 27px;
    line-height: 16px;
}

.tree .root {
    padding-left: 8px;
}

.twist {
    width: 10px;
    height: 8px;
}

.stub {
    width: 4px;
    height: 1px;
    background: repeating-linear-gradient(90deg, #888 0 1px, transparent 1px 2px);
}

.guide {
    width: 9px;
    height: 18px;
    margin-left: 5px;
    background: linear-gradient(#888 50%, transparent 50%) 0 0 / 1px 2px repeat-y,
        linear-gradient(90deg, #888 50%, transparent 50%) 0 9px / 2px 1px repeat-x;
}

.guide.last {
    height: 10px;
    align-self: flex-start;
}

.item {
    display: flex;
    align-items: flex-start;
    gap: 5px;
    height: 18px;
    padding: 0 4px 0 2px;
}

.item .icon {
    margin-top: 1px;
}

.item.result {
    font-size: 12px;
    line-height: 18px;
}

.item.selected {
    background: #d9d9d9;
}

.tabs {
    display: flex;
    height: 21px;
    margin-top: -1px;
}

.tab {
    display: flex;
    align-items: center;
    gap: 2px;
    flex: 1;
    padding: 0 4px;
    border: 1px solid #c6c6c6;
    border-left: none;
    white-space: nowrap;
}

.tab.active {
    flex: 0 0 111px;
    border-top: none;
    background: #fff;
}

/* Graphics editor */
.editor {
    display: flex;
    flex-direction: column;
    flex: 1;
    min-width: 0;
}

.location {
    display: flex;
    align-items: center;
    height: 27px;
    padding: 2px 3px 0 9px;
    border-top: 1px solid transparent;
}

.path {
    display: flex;
    align-items: center;
    flex: 1;
    height: 22px;
    margin-left: 7px;
    padding: 0 0 2px 4px;
    border: 1px solid #adadb2;
    font-size: 13px;
}

.path button {
    display: flex;
    align-items: center;
    gap: 9px;
}

.path-arrow {
    width: 4px;
    height: 8px;
}

.frame {
    display: grid;
    grid-template-columns: 1fr 15px;
    grid-template-rows: 1fr 16px;
    flex: 1;
    min-height: 0;
    margin-right: 1px;
    border: 2px solid #6e6e6e;
    border-right: 1px solid #dcdcdc;
    border-bottom: none;
}

.canvas {
    position: relative;
    overflow: hidden;
    background: #fff;
    color: #000;
    font-family: Lato, sans-serif;
    font-size: 13px;
    line-height: 17px;
    font-variant-ligatures: none;
}

.note {
    position: absolute;
    display: flex;
    flex-direction: column;
    justify-content: space-between;
    padding: 0 8px 6px;
    border: 1px solid #bdbdbd;
}

.note h2,
.note p {
    margin: 0;
    font-size: 13px;
    white-space: nowrap;
}

.main-note {
    left: 8px;
    top: 37px;
    width: 651px;
    height: 397px;
}

.bounds-note {
    left: 15px;
    top: 448px;
    width: 334px;
    height: 137px;
}

.summary-note {
    left: 363px;
    top: 448px;
    width: 296px;
    height: 137px;
}

.links {
    position: absolute;
    left: 0;
    top: 0;
}

.node {
    position: absolute;
    width: 53px;
}

.pic {
    width: 53px;
    height: 52px;
}

.inflow1 { left: 34px; top: 108px; }
.inflow2 { left: 34px; top: 214px; }
.pool2 { left: 216px; top: 153px; }
.outflow1 { left: 397px; top: 47px; }
.outflow2 { left: 397px; top: 153px; }
.outflow3 { left: 397px; top: 259px; }
.history1 { left: 533px; top: 47px; }
.upper { left: 80px; top: 501px; }
.lower { left: 231px; top: 501px; }
.inputs { left: 458px; top: 501px; }

.label {
    display: flex;
    justify-content: center;
    margin-top: 4px;
    white-space: nowrap;
}

.port {
    position: absolute;
    top: 43px;
    width: 8px;
    height: 8px;
    border: 1px solid #808080;
}

.port.out {
    left: 55px;
    background: #33cc33;
}

.port.in {
    left: -9px;
    background: linear-gradient(#000, #000) 2px 2px / 2px 2px no-repeat #fff;
}

.flag {
    position: absolute;
    left: -7px;
    top: -5px;
    border: 5px solid transparent;
    border-left: 6px solid #dc143c;
    border-right: none;
}

.handles {
    position: absolute;
    left: -14px;
    top: -11px;
    display: grid;
    grid-template-columns: repeat(3, 7px);
    justify-content: space-between;
    align-content: space-between;
    width: 82px;
    height: 88px;
}

.handles i {
    height: 7px;
    border: 1px solid #41699c;
    background: #6699e8;
}

.handles .gap {
    visibility: hidden;
}

/* Scroll bars */
.scroll {
    display: flex;
    background: #f0f0f0;
}

.scroll button {
    display: flex;
    align-items: center;
    justify-content: center;
    width: 17px;
    height: 17px;
}

.scroll.vertical {
    flex-direction: column;
}

.scroll.vertical button {
    width: 15px;
}

.scroll.horizontal button {
    height: 15px;
}

.track {
    flex: 1;
}

.thumb {
    background: #cdcdcd;
}

.vertical .thumb {
    height: 28%;
    margin-top: 39px;
}

.horizontal .thumb {
    width: 56%;
    height: 15px;
}

.corner {
    width: 15px;
    height: 16px;
}

/* Right hand tools */
.sidebar {
    display: flex;
    flex-direction: column;
    align-items: center;
    width: 28px;
    flex: none;
}

.sidebar .sep {
    width: 22px;
    height: 1px;
    margin: 4px 0 3px;
    flex: none;
}

.sidebar .grip {
    width: 14px;
    height: 2px;
    margin: 5px 0;
    flex: none;
    background: repeating-linear-gradient(90deg, #b8b8b8 0 2px, transparent 2px 4px);
}

/* Status bar */
.status {
    display: flex;
    align-items: center;
    height: 25px;
    padding: 0 5px 1px 9px;
    border-bottom: 1px solid #0a7be0;
    background: #217346;
    color: #f2f7f4;
}

.status span {
    display: flex;
    align-items: center;
    gap: 4px;
}

.mode {
    width: 162px;
}

.elapsed {
    width: 86px;
}

.duration {
    width: 163px;
}

.zoom {
    display: flex;
    align-items: center;
    margin-left: auto;
}

.zoom label {
    margin-right: 16px;
}

.zoom input {
    width: 88px;
    margin: 0 10px;
}

.zoom input + button {
    margin-right: 10px;
}

.zoom input::-webkit-slider-runnable-track {
    height: 1px;
    background: #c5dccf;
}

.zoom input::-webkit-slider-thumb {
    appearance: none;
    width: 5px;
    height: 14px;
    margin-top: -7px;
    border: 1px solid #d5d5d5;
    background: #f0f0f0;
}
```
